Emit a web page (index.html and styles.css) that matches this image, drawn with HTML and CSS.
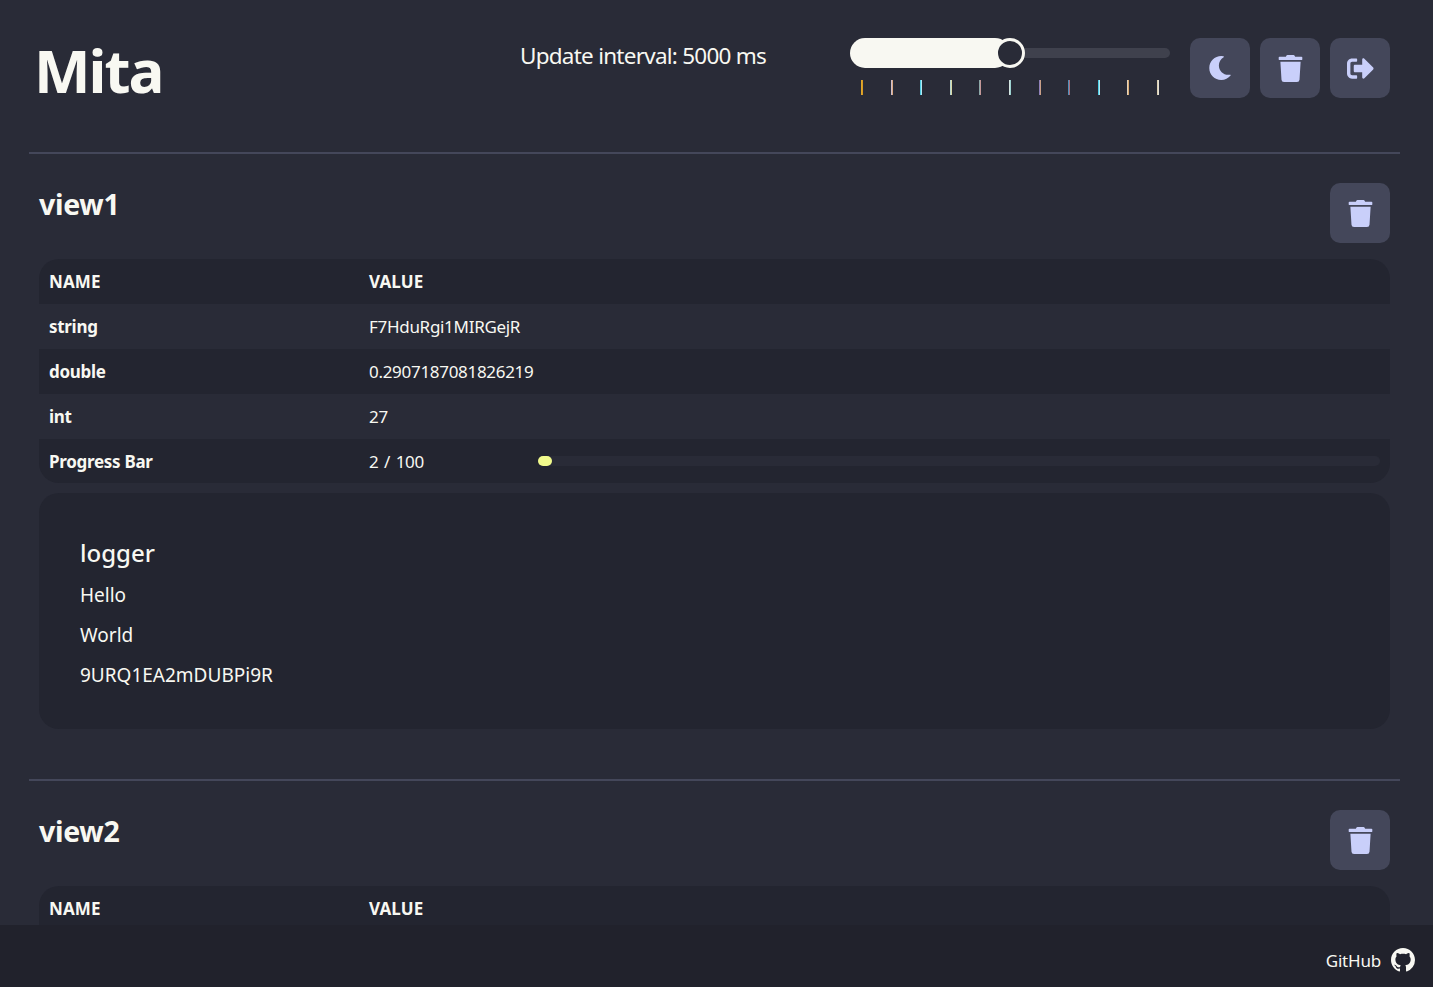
FILE: index.html
```html
<!DOCTYPE html>
<html lang="en">
<head>
  <meta charset="UTF-8" />
  <meta name="viewport" content="width=device-width, initial-scale=1" />
  <title>Mita</title>
  <link rel="stylesheet" href="styles.css">
</head>
<body>
  <div class="page">
    <header class="top">
      <h1>Mita</h1>
      <div class="interval">Update interval: 5000 ms</div>
      <div class="slider">
        <div class="track">
          <div class="fill"></div>
          <div class="thumb"></div>
        </div>
        <div class="ticks">
          <i></i><i></i><i></i><i></i><i></i><i></i><i></i><i></i><i></i><i></i><i></i>
        </div>
      </div>
      <div class="buttons">
        <button type="button">
          <svg class="moon" viewBox="0 0 512 512"><path d="M283.211 512c78.962 0 151.079-35.925 198.857-94.792 7.068-8.708-.639-21.43-11.562-19.35-124.203 23.654-238.262-71.576-238.262-196.954 0-72.222 38.662-138.635 101.498-174.394 9.686-5.512 7.25-20.197-3.756-22.23A258.156 258.156 0 0 0 283.211 0c-141.309 0-256 114.511-256 256 0 141.309 114.511 256 256 256z"/></svg>
        </button>
        <button type="button">
          <svg class="trash" viewBox="0 0 448 512"><path d="M432 32H312l-9.4-18.7A24 24 0 0 0 281.1 0H166.8a23.72 23.72 0 0 0-21.4 13.3L136 32H16A16 16 0 0 0 0 48v32a16 16 0 0 0 16 16h416a16 16 0 0 0 16-16V48a16 16 0 0 0-16-16zM53.2 467a48 48 0 0 0 47.9 45h245.8a48 48 0 0 0 47.9-45L416 128H32z"/></svg>
        </button>
        <button type="button">
          <svg class="logout" viewBox="0 0 512 512"><path d="M497 273L329 441c-15 15-41 4.5-41-17v-96H152c-13.3 0-24-10.7-24-24v-96c0-13.3 10.7-24 24-24h136V88c0-21.4 25.9-32 41-17l168 168c9.3 9.4 9.3 24.6 0 34zM192 436v-40c0-6.6-5.4-12-12-12H96c-17.7 0-32-14.3-32-32V160c0-17.7 14.3-32 32-32h84c6.6 0 12-5.4 12-12V76c0-6.6-5.4-12-12-12H96c-53 0-96 43-96 96v192c0 53 43 96 96 96h84c6.6 0 12-5.4 12-12z"/></svg>
        </button>
      </div>
    </header>

    <section class="view">
      <div class="view-head">
        <h2>view1</h2>
        <button type="button">
          <svg class="trash" viewBox="0 0 448 512"><path d="M432 32H312l-9.4-18.7A24 24 0 0 0 281.1 0H166.8a23.72 23.72 0 0 0-21.4 13.3L136 32H16A16 16 0 0 0 0 48v32a16 16 0 0 0 16 16h416a16 16 0 0 0 16-16V48a16 16 0 0 0-16-16zM53.2 467a48 48 0 0 0 47.9 45h245.8a48 48 0 0 0 47.9-45L416 128H32z"/></svg>
        </button>
      </div>
      <table>
        <thead>
          <tr><th>NAME</th><th>VALUE</th></tr>
        </thead>
        <tbody>
          <tr><th>string</th><td>F7HduRgi1MIRGejR</td></tr>
          <tr><th>double</th><td>0.2907187081826219</td></tr>
          <tr><th>int</th><td>27</td></tr>
          <tr>
            <th>Progress Bar</th>
            <td>
              <div class="progress">
                <span>2 / 100</span>
                <div class="bar"><div class="bar-fill"></div></div>
              </div>
            </td>
          </tr>
        </tbody>
      </table>
      <div class="logger">
        <h3>logger</h3>
        <p>Hello</p>
        <p>World</p>
        <p>9URQ1EA2mDUBPi9R</p>
      </div>
    </section>

    <section class="view">
      <div class="view-head">
        <h2>view2</h2>
        <button type="button">
          <svg class="trash" viewBox="0 0 448 512"><path d="M432 32H312l-9.4-18.7A24 24 0 0 0 281.1 0H166.8a23.72 23.72 0 0 0-21.4 13.3L136 32H16A16 16 0 0 0 0 48v32a16 16 0 0 0 16 16h416a16 16 0 0 0 16-16V48a16 16 0 0 0-16-16zM53.2 467a48 48 0 0 0 47.9 45h245.8a48 48 0 0 0 47.9-45L416 128H32z"/></svg>
        </button>
      </div>
      <table>
        <thead>
          <tr><th>NAME</th><th>VALUE</th></tr>
        </thead>
      </table>
    </section>
  </div>

  <footer class="bottom">
    <span>GitHub</span>
    <svg class="github" viewBox="0 0 16 16"><path d="M8 0C3.58 0 0 3.58 0 8c0 3.54 2.29 6.53 5.47 7.59.4.07.55-.17.55-.38 0-.19-.01-.82-.01-1.49-2.01.37-2.53-.49-2.69-.94-.09-.23-.48-.94-.82-1.13-.28-.15-.68-.52-.01-.53.63-.01 1.08.58 1.23.82.72 1.21 1.87.87 2.33.66.07-.52.28-.87.51-1.07-1.78-.2-3.64-.89-3.64-3.95 0-.87.31-1.59.82-2.15-.08-.2-.36-1.02.08-2.12 0 0 .67-.21 2.2.82.64-.18 1.32-.27 2-.27.68 0 1.36.09 2 .27 1.53-1.04 2.2-.82 2.2-.82.44 1.1.16 1.92.08 2.12.51.56.82 1.27.82 2.15 0 3.07-1.87 3.75-3.65 3.95.29.25.54.73.54 1.48 0 1.07-.01 1.93-.01 2.2 0 .21.15.46.55.38A8.013 8.013 0 0016 8c0-4.42-3.58-8-8-8z"/></svg>
  </footer>
</body>
</html>
```

FILE: styles.css
```css
html, body {
  height: 100%;
  margin: 0;
  overflow: hidden;
}
body {
  display: flex;
  flex-direction: column;
  background-color: #292b37;
  color: #f8f8f2;
  font-family: "Noto Sans", Arial, sans-serif;
}
.page {
  flex: 1;
  min-height: 0;
  overflow: hidden;
  padding: 0 33px 0 29px;
}

/* header */
.top {
  display: flex;
  align-items: flex-start;
  box-sizing: border-box;
  height: 154px;
  padding-top: 38px;
  border-bottom: 2px solid #44475a;
}
h1 {
  width: 486px;
  margin: -8px 0 0 5px;
  font-size: 60px;
  line-height: 80px;
  font-weight: 700;
  letter-spacing: -2px;
}
.interval {
  width: 330px;
  font-size: 22.5px;
  line-height: 36px;
  letter-spacing: -0.75px;
}
.slider {
  width: 320px;
  margin-right: 20px;
}
.track {
  position: relative;
  height: 30px;
}
.track::before {
  content: "";
  position: absolute;
  left: 0;
  right: 0;
  top: 10px;
  height: 10px;
  border-radius: 5px;
  background-color: #3f414d;
}
.fill {
  position: absolute;
  left: 0;
  top: 0;
  width: 160px;
  height: 30px;
  border-radius: 15px;
  background-color: #f8f8f2;
}
.thumb {
  position: absolute;
  left: 145px;
  top: 0;
  width: 30px;
  height: 30px;
  box-sizing: border-box;
  border: 3.5px solid #f8f8f2;
  border-radius: 50%;
  background-color: #292b37;
}
.ticks {
  display: flex;
  justify-content: space-between;
  padding: 12px 11px 0;
}
.ticks i {
  display: block;
  width: 2px;
  height: 15px;
  background-color: #f8f8f2;
}
.ticks i:nth-child(1) { background: linear-gradient(90deg, #e0b030, #d8921e); }
.ticks i:nth-child(2) { background: linear-gradient(90deg, #c8c8f0, #e0a060); }
.ticks i:nth-child(3) { background: linear-gradient(90deg, #18c0e0, #e8f4f4); }
.ticks i:nth-child(4) { background: linear-gradient(90deg, #a8d8e8, #e8d890); }
.ticks i:nth-child(5) { background: linear-gradient(90deg, #70b0b0, #e09090); }
.ticks i:nth-child(6) { background: linear-gradient(90deg, #f0f0ea, #80c8c8); }
.ticks i:nth-child(7) { background: linear-gradient(90deg, #7070d0, #e8b070); }
.ticks i:nth-child(8) { background: linear-gradient(90deg, #20a0d8, #d86060); }
.ticks i:nth-child(9) { background: linear-gradient(90deg, #18c0e0, #e8f4f4); }
.ticks i:nth-child(10) { background: linear-gradient(90deg, #e8e8e0, #d89850); }
.ticks i:nth-child(11) { background: linear-gradient(90deg, #d8c8a0, #e8e8e8); }

.buttons {
  display: flex;
  gap: 10px;
}
button {
  display: flex;
  align-items: center;
  justify-content: center;
  width: 60px;
  height: 60px;
  padding: 0;
  border: none;
  border-radius: 10px;
  background-color: #44475a;
  fill: #c9cffa;
  cursor: pointer;
}
.moon {
  width: 24px;
  height: 24px;
}
.trash,
.logout {
  width: 27px;
  height: 27px;
}

/* views */
.view {
  padding: 0 10px 50px;
}
.view + .view {
  border-top: 2px solid #44475a;
}
.view-head {
  display: flex;
  align-items: flex-start;
  justify-content: space-between;
  padding: 29px 0 16px;
}
h2 {
  margin: -1px 0 0;
  font-size: 28.5px;
  line-height: 44px;
  font-weight: 700;
  letter-spacing: -0.3px;
}
table {
  width: 100%;
  border-collapse: separate;
  border-spacing: 0;
  table-layout: fixed;
  font-size: 17px;
  letter-spacing: -0.3px;
}
th, td {
  height: 45px;
  padding: 0 10px;
  box-sizing: border-box;
  text-align: left;
}
th {
  font-weight: 700;
}
th:first-child {
  width: 320px;
}
thead th {
  letter-spacing: 0.1px;
}
thead tr, tbody tr:nth-child(even) {
  background-color: #232530;
}
thead th:first-child { border-top-left-radius: 20px; }
thead th:last-child { border-top-right-radius: 20px; }
tbody tr:last-child th,
tbody tr:last-child td {
  height: 44px;
}
tbody tr:last-child th { border-bottom-left-radius: 20px; }
tbody tr:last-child td { border-bottom-right-radius: 20px; }
.progress {
  display: flex;
  align-items: center;
}
.progress span {
  width: 169px;
  word-spacing: 1.5px;
}
.bar {
  flex: 1;
  height: 10px;
  border-radius: 5px;
  background-color: #292b37;
}
.bar-fill {
  width: 14px;
  height: 10px;
  border-radius: 5px;
  background-color: #f1fa8c;
}
.logger {
  margin-top: 10px;
  padding: 42px 41px 41px;
  height: 236px;
  box-sizing: border-box;
  border-radius: 20px;
  background-color: #232530;
  font-size: 19px;
}
h3 {
  margin: -2px 0 2px;
  font-size: 24px;
  line-height: 40px;
  font-weight: 500;
}
.logger p {
  margin: 0;
  line-height: 40px;
}

/* footer */
.bottom {
  display: flex;
  flex: none;
  align-items: center;
  justify-content: flex-end;
  gap: 10px;
  box-sizing: border-box;
  height: 62px;
  padding: 8px 18px 0 0;
  background-color: #21222c;
  font-size: 17px;
  letter-spacing: -0.2px;
}
.github {
  width: 24px;
  height: 24px;
  fill: #f8f8f2;
}
```
